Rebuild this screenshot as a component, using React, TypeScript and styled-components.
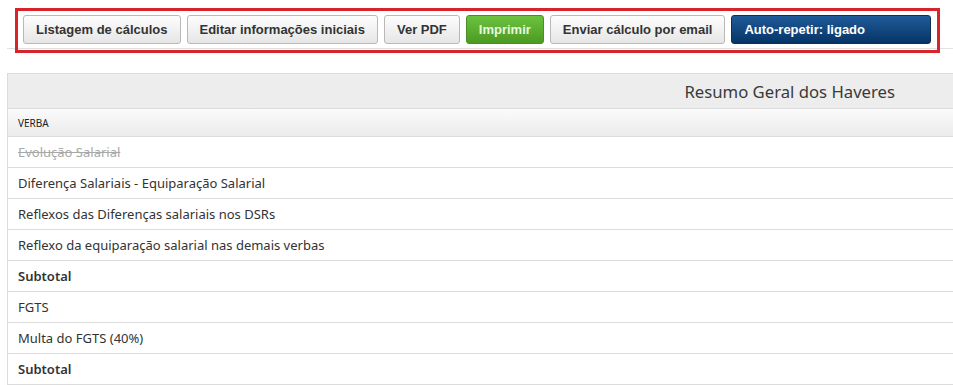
import React from 'react';
import styled, { createGlobalStyle } from 'styled-components';

type Variant = 'default' | 'success' | 'primary';

const GlobalStyle = createGlobalStyle`
  body {
    margin: 0;
    background: #ffffff;
    font-family: 'Liberation Sans', Arial, sans-serif;
    overflow: hidden;
  }
`;

const Page = styled.div`
  width: 953px;
  padding-top: 8px;
`;

const ToolbarArea = styled.div`
  margin-left: 7px;
  height: 40px;
  border-bottom: 1px solid #e2e2e2;
`;

const Highlight = styled.div`
  position: relative;
  z-index: 1;
  box-sizing: border-box;
  margin-left: 8px;
  width: 925px;
  height: 45px;
  border: 3px solid #d8232a;
  padding: 4px 0 0 5px;
  display: flex;
  gap: 6px;
`;

const variantStyles: Record<Variant, string> = {
  default: `
    background: linear-gradient(#fdfdfd, #e6e6e6);
    border-color: #b9b9b9;
    color: #333333;
  `,
  success: `
    background: linear-gradient(#6cc23f, #4c9a22);
    border-color: #4a8f26;
    color: #e9f7df;
  `,
  primary: `
    background: linear-gradient(#1f5b99, #063466);
    border-color: #0a2f59;
    color: #ffffff;
  `,
};

const Button = styled.button<{ $variant?: Variant; $wide?: boolean }>`
  box-sizing: border-box;
  height: 29px;
  padding: 0 12px;
  border: 1px solid;
  border-radius: 3px;
  font-family: 'Liberation Sans', Arial, sans-serif;
  font-weight: bold;
  font-size: 13px;
  text-align: left;
  cursor: pointer;
  white-space: nowrap;
  ${({ $wide }) => ($wide ? 'width: 200px;' : '')}
  ${({ $variant = 'default' }) => variantStyles[$variant]}
`;

const Panel = styled.div`
  margin: 24px 0 0 7px;
  width: 960px;
  border-top: 1px solid #dcdcdc;
  border-left: 1px solid #dcdcdc;
  font-family: 'Noto Sans', 'Open Sans', sans-serif;
  color: #333333;
`;

const PanelTitle = styled.div`
  height: 34px;
  background: #ededed;
  border-bottom: 1px solid #dcdcdc;
  display: flex;
  align-items: center;
  justify-content: flex-end;
  padding-right: 73px;
  font-size: 16.7px;
  color: #3a3a3a;
`;

const HeadRow = styled.div`
  height: 27px;
  background: linear-gradient(#fbfbfb, #ebebeb);
  border-bottom: 1px solid #dcdcdc;
  display: flex;
  align-items: center;
  padding-left: 10px;
  font-size: 10px;
  color: #222;
`;

const Row = styled.div<{ $bold?: boolean; $struck?: boolean }>`
  height: 30px;
  border-bottom: 1px solid #dcdcdc;
  display: flex;
  align-items: center;
  padding-left: 10px;
  font-size: 13px;
  font-weight: ${({ $bold }) => ($bold ? 600 : 400)};
  color: ${({ $struck }) => ($struck ? '#a8a8a8' : '#333')};
  text-decoration: ${({ $struck }) => ($struck ? 'line-through' : 'none')};
`;

const rows: { label: string; bold?: boolean; struck?: boolean }[] = [
  { label: 'Evolução Salarial', struck: true },
  { label: 'Diferença Salariais - Equiparação Salarial' },
  { label: 'Reflexos das Diferenças salariais nos DSRs' },
  { label: 'Reflexo da equiparação salarial nas demais verbas' },
  { label: 'Subtotal', bold: true },
  { label: 'FGTS' },
  { label: 'Multa do FGTS (40%)' },
  { label: 'Subtotal', bold: true },
];

export default function App() {
  return (
    <Page>
      <GlobalStyle />
      <ToolbarArea>
        <Highlight>
          <Button>Listagem de cálculos</Button>
          <Button>Editar informações iniciais</Button>
          <Button>Ver PDF</Button>
          <Button $variant="success">Imprimir</Button>
          <Button>Enviar cálculo por email</Button>
          <Button $variant="primary" $wide>
            Auto-repetir: ligado
          </Button>
        </Highlight>
      </ToolbarArea>
      <Panel>
        <PanelTitle>Resumo Geral dos Haveres</PanelTitle>
        <HeadRow>VERBA</HeadRow>
        {rows.map((r, i) => (
          <Row key={i} $bold={r.bold} $struck={r.struck}>
            {r.label}
          </Row>
        ))}
      </Panel>
    </Page>
  );
}
